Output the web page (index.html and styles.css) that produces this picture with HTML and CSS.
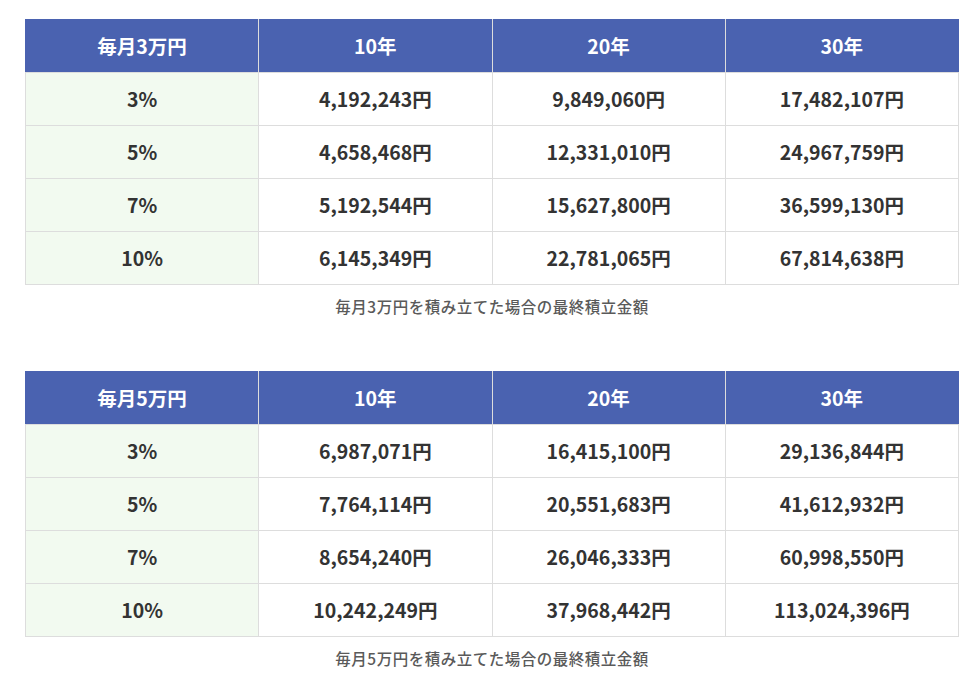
FILE: index.html
```html
<!DOCTYPE html>
<html lang="ja">
<head>
<meta charset="utf-8">
<title>積立シミュレーション</title>
<link rel="stylesheet" href="styles.css">
</head>
<body>
<main class="page">
  <figure class="sim">
    <table class="sim-table">
      <thead>
        <tr><th>毎月3万円</th><th>10年</th><th>20年</th><th>30年</th></tr>
      </thead>
      <tbody>
        <tr><td class="rate">3%</td><td>4,192,243円</td><td>9,849,060円</td><td>17,482,107円</td></tr>
        <tr><td class="rate">5%</td><td>4,658,468円</td><td>12,331,010円</td><td>24,967,759円</td></tr>
        <tr><td class="rate">7%</td><td>5,192,544円</td><td>15,627,800円</td><td>36,599,130円</td></tr>
        <tr><td class="rate">10%</td><td>6,145,349円</td><td>22,781,065円</td><td>67,814,638円</td></tr>
      </tbody>
    </table>
    <figcaption class="sim-caption">毎月3万円を積み立てた場合の最終積立金額</figcaption>
  </figure>
  <figure class="sim">
    <table class="sim-table">
      <thead>
        <tr><th>毎月5万円</th><th>10年</th><th>20年</th><th>30年</th></tr>
      </thead>
      <tbody>
        <tr><td class="rate">3%</td><td>6,987,071円</td><td>16,415,100円</td><td>29,136,844円</td></tr>
        <tr><td class="rate">5%</td><td>7,764,114円</td><td>20,551,683円</td><td>41,612,932円</td></tr>
        <tr><td class="rate">7%</td><td>8,654,240円</td><td>26,046,333円</td><td>60,998,550円</td></tr>
        <tr><td class="rate">10%</td><td>10,242,249円</td><td>37,968,442円</td><td>113,024,396円</td></tr>
      </tbody>
    </table>
    <figcaption class="sim-caption">毎月5万円を積み立てた場合の最終積立金額</figcaption>
  </figure>
</main>
</body>
</html>
```

FILE: styles.css
```css
html, body {
  margin: 0;
  padding: 0;
  background: #ffffff;
}
body {
  font-family: "Noto Sans CJK JP", "Noto Sans", sans-serif;
  color: #333333;
}
.page {
  padding: 19px 21px 0 25px;
}
.sim {
  margin: 0 0 55px 0;
}
.sim:last-child {
  margin-bottom: 0;
}
.sim-table {
  width: 934px;
  border-collapse: collapse;
  table-layout: fixed;
}
.sim-table th,
.sim-table td {
  height: 52px;
  padding: 0;
  text-align: center;
  vertical-align: middle;
  font-size: 19.5px;
  font-weight: 700;
  line-height: 1;
  border: 1px solid #dddddd;
}
.sim-table th {
  background: #4a62b0;
  color: #ffffff;
  border-color: #dddddd;
  border-top-color: #4a62b0;
}
.sim-table th:first-child {
  border-left-color: #4a62b0;
}
.sim-table th:last-child {
  border-right-color: #4a62b0;
}
.sim-table td {
  background: #ffffff;
  color: #333333;
}
.sim-table td.rate {
  background: #f2faf0;
}
.sim-caption {
  margin-top: 11px;
  text-align: center;
  font-size: 15.5px;
  letter-spacing: 0.5px;
  font-weight: 500;
  color: #5a5a5a;
  line-height: 20px;
}
```
